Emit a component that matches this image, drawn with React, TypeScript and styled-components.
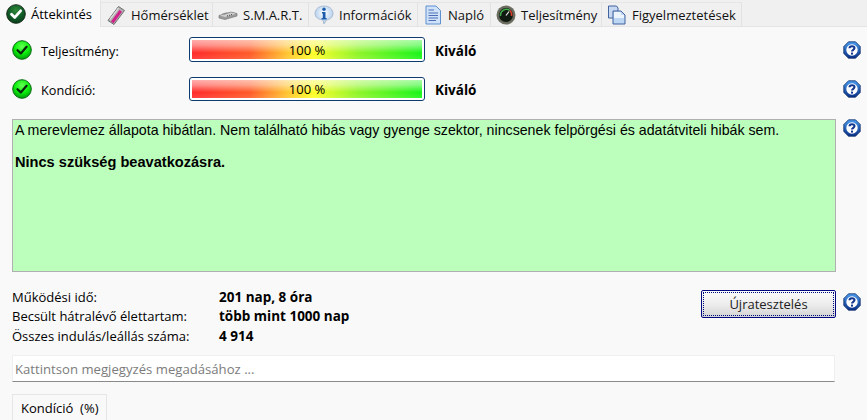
import React from "react";
import styled, { createGlobalStyle } from "styled-components";

const Global = createGlobalStyle`
  html, body { margin: 0; padding: 0; background: #f9f9f9; }
  body { font-family: "Open Sans", "Noto Sans", sans-serif; font-size: 13px; color: #000; }
  #root { width: 867px; height: 420px; overflow: hidden; }
`;

const Page = styled.div`
  width: 867px; height: 420px; display: flex; flex-direction: column; overflow: hidden;
`;
const TabBar = styled.div`
  display: flex; height: 27px; background: #f0f0f0; align-items: flex-start; box-sizing: border-box;
  border-bottom: 1px solid #e4e4e4; flex: none;
`;
const Tab = styled.div<{ $active?: boolean; $w: number }>`
  width: ${p => p.$w}px; height: ${p => (p.$active ? 27 : 24)}px; margin-top: ${p => (p.$active ? 0 : 2)}px;
  background: ${p => (p.$active ? "#f9f9f9" : "#f0f0f0")};
  border-right: 1px solid #e2e2e2; border-top: 1px solid ${p => (p.$active ? "#f9f9f9" : "#e6e6e6")};
  box-sizing: border-box; flex: none;
  display: flex; align-items: center; gap: 5px; padding-left: ${p => (p.$active ? 6 : 5)}px;
  white-space: nowrap; color: ${p => (p.$active ? "#000" : "#111")};
  position: relative; z-index: ${p => (p.$active ? 1 : 0)};
`;
const Content = styled.div`
  padding: 10px 0 0 12px; display: flex; flex-direction: column; flex: 1;
`;
const StatusRow = styled.div`
  display: flex; align-items: center; height: 28px; margin-bottom: 11px;
`;
const IconSlot = styled.div`width: 29px; flex: none; display: flex; margin-top: -3px;`;
const RowLabel = styled.div`width: 148px; flex: none; font-size: 12.7px;`;
const Bar = styled.div<{ $top: number; $h: number }>`
  width: 236px; height: ${p => p.$h}px; box-sizing: border-box; border: 1px solid #0d3b6e; border-radius: 3px;
  padding: 2px; background: #fff; flex: none; align-self: flex-start; margin-top: ${p => p.$top}px;
`;
const BarFill = styled.div`
  height: 100%; display: flex; align-items: center; justify-content: center; position: relative; font-size: 13px;
  background: linear-gradient(90deg, #ff2a2a 0%, #ff5a28 25%, #ffc830 42%, #ffff28 53%, #90f528 72%, #18f518 100%);
  &::before {
    content: ""; position: absolute; inset: 0;
    background: linear-gradient(180deg, rgba(255,255,255,.62) 0%, rgba(255,255,255,.45) 28%, rgba(255,255,255,0) 68%, rgba(255,255,255,.1) 100%);
  }
  span { position: relative; }
`;
const Grade = styled.div`font-weight: 700; font-size: 13.5px; margin-left: 10px; flex: 1;`;
const HelpSlot = styled.div`width: 32px; flex: none; display: flex; padding-left: 8px; box-sizing: border-box; margin-top: -2px;`;
const MessageRow = styled.div`display: flex; align-items: flex-start; margin-top: 4px;`;
const Message = styled.div`
  width: 824px; height: 153px; box-sizing: border-box; flex: none; background: #bcffbc; border: 1px solid #b0b0b0;
  padding: 2px 2px; font-family: "Liberation Sans", Arial, sans-serif; font-size: 14.19px; line-height: 16px; color: #000;
  p { margin: 0 0 16px; }
  strong { font-weight: 700; font-size: 14.6px; }
`;
const HelpTop = styled.div`width: 31px; padding-left: 7px; box-sizing: border-box; display: flex; margin-top: 0;`;
const InfoRow = styled.div`display: flex; margin-top: 15px; height: 58px; align-items: flex-start;`;
const InfoGrid = styled.div`
  display: grid; grid-template-columns: 207px 1fr; grid-auto-rows: 19.5px; width: 689px; flex: none; align-items: center;
  b { font-weight: 700; font-size: 13.5px; }
`;
const Retest = styled.div`
  width: 135px; height: 28px; margin-top: 3px; box-sizing: border-box; flex: none; border: 1px solid #000a80; border-radius: 2px;
  background: linear-gradient(180deg, #fcfcfc 0%, #ededed 50%, #d4d4d4 100%); padding: 1px; display: flex;
  div { flex: 1; border: 1px dotted #000a80; display: flex; align-items: center; justify-content: center; color: #222; }
`;
const HelpBtn = styled.div`padding-left: 7px; display: flex; margin-top: 6px;`;
const Note = styled.div`
  width: 823px; height: 27px; box-sizing: border-box; background: #fff; border: 1px solid #efefef; border-bottom: 1px solid #8a8a8a;
  display: flex; align-items: center; padding-left: 2px; color: #7c7c7c; margin-top: 10px; flex: none; font-size: 13.15px;
`;
const ChartTab = styled.div`
  width: 95px; height: 26px; box-sizing: border-box; border: 1px solid #e6e6e6; border-bottom: none; margin-top: 12px;
  display: flex; align-items: center; padding-left: 8px; white-space: pre; flex: none;
`;

const Check = ({ size = 20, dark = false }: { size?: number; dark?: boolean }) => (
  <svg width={size} height={size} viewBox="0 0 20 20">
    <defs>
      <radialGradient id={dark ? "cd" : "cg"} cx="50%" cy="32%" r="68%">
        <stop offset="0" stopColor={dark ? "#2f8a38" : "#66ff55"} />
        <stop offset=".55" stopColor={dark ? "#12602a" : "#0cf00c"} />
        <stop offset="1" stopColor={dark ? "#0a3c18" : "#009a0a"} />
      </radialGradient>
    </defs>
    <circle cx="10" cy="10" r="9.3" fill={`url(#${dark ? "cd" : "cg"})`} stroke={dark ? "#1a2e1c" : "#0a6a14"} strokeWidth="1" />
    <path d="M5.5 10.2 L8.8 13.4 L14.6 6.8" fill="none" stroke={dark ? "#fff" : "#08240c"} strokeWidth={dark ? 2.8 : 2.2} strokeLinecap="round" strokeLinejoin="round" />
  </svg>
);

const Help = () => (
  <svg width="18" height="18" viewBox="0 0 18 18">
    <defs>
      <linearGradient id="hg" x1="0" y1="0" x2="0" y2="1">
        <stop offset="0" stopColor="#4a9cf0" />
        <stop offset="1" stopColor="#0a2f86" />
      </linearGradient>
    </defs>
    <path d="M5.5 .8 H12.5 L17.2 5.5 V12.5 L12.5 17.2 H5.5 L.8 12.5 V5.5 Z" fill="url(#hg)" stroke="#0a2a66" strokeWidth=".8" strokeLinejoin="round" />
    <circle cx="9" cy="9" r="5.7" fill="#fff" />
    <path d="M6.5 7.2 C6.6 4.6 11.5 4.6 11.5 7.1 C11.5 8.8 9 8.8 9 10.6" fill="none" stroke="#12358e" strokeWidth="2.1" />
    <rect x="8" y="11.6" width="2" height="2" fill="#12358e" />
  </svg>
);

const ThermoIcon = () => (
  <svg width="20" height="20" viewBox="0 0 20 20">
    <path d="M2 15.5 L12.5 1.5 L18.5 5.5 L8 19.5 Z" fill="#b4b0b0" stroke="#6e6e6e" strokeWidth="1" strokeLinejoin="round" />
    <path d="M5 16.5 L13.5 5 L16 6.8 L7.5 18.3 Z" fill="#d0208a" />
    <path d="M3.8 14.5 L12.5 3" stroke="#e6e6e6" strokeWidth="1.2" />
  </svg>
);
const DriveIcon = () => (
  <svg width="20" height="20" viewBox="0 0 20 20">
    <path d="M1 10.5 L13 7 L19 8.5 L19 11 L7 14.5 L1 13 Z" fill="#9c9c9c" stroke="#6c6c6c" strokeWidth=".6" />
    <path d="M2 10.5 L13 7.5 L18 8.7 L7 12 Z" fill="#d0d0d0" />
    <path d="M3.5 9 L8 7.5 L11 8 L6 9.8 Z" fill="#8a8a8a" />
    <path d="M9 11 L10 10.7 M11 10.4 L12 10.1 M13 9.8 L14 9.5" stroke="#444" strokeWidth="1" />
  </svg>
);
const InfoIcon = () => (
  <svg width="20" height="20" viewBox="0 0 20 20">
    <defs>
      <radialGradient id="ig" cx="50%" cy="40%" r="60%">
        <stop offset="0" stopColor="#ffffff" />
        <stop offset="1" stopColor="#a9c8ea" />
      </radialGradient>
    </defs>
    <path d="M10 1 C15 1 19 4 19 8.5 C19 12.5 15.5 14.5 12.5 15 L10 19 L9 15 C4.5 14.5 1 12.5 1 8.5 C1 4 5 1 10 1 Z" fill="url(#ig)" stroke="#9fb4cc" strokeWidth=".8" />
    <circle cx="10" cy="4.2" r="1.7" fill="#1c5cab" />
    <path d="M8 7 H11.5 V13 H12.6 V14.4 H7.6 V13 H8.8 V8.4 H8 Z" fill="#1c5cab" />
  </svg>
);
const DocIcon = ({ copy = false }: { copy?: boolean }) => (
  <svg width="20" height="20" viewBox="0 0 20 20">
    {copy && <path d="M1.5 1 H9.5 L11 3 V13 H1.5 Z" fill="#c6d8f2" stroke="#40629e" strokeWidth="1" />}
    <path d={copy ? "M6 6 H14 L18 10 V19 H6 Z" : "M3 1 H13 L17.5 5.5 V19 H3 Z"} fill={copy ? "#bcd6f4" : "#cfe2fa"} stroke={copy ? "#40629e" : "#5f90cf"} strokeWidth="1" />
    {copy && <path d="M7 7 H13.5 L14 10 H17 V13 H7 Z" fill="#eef4fc" />}
    {!copy && <path d="M5.5 5 H11 M5.5 8 H15 M5.5 10.5 H15 M5.5 13 H15 M5.5 15.5 H13" stroke="#4f6fb4" strokeWidth="1.2" />}
  </svg>
);
const GaugeIcon = () => (
  <svg width="20" height="20" viewBox="0 0 20 20">
    <circle cx="10" cy="10" r="9.5" fill="#6b6b60" />
    <circle cx="10" cy="10" r="7" fill="#101a10" />
    <path d="M4.5 11 A6 6 0 0 1 14 5.5" fill="none" stroke="#3fa84a" strokeWidth="1.6" />
    <path d="M14 5.5 A6 6 0 0 1 15.5 11" fill="none" stroke="#d63a2a" strokeWidth="1.6" />
    <path d="M10 10.5 L13 6.5" stroke="#e8e8e8" strokeWidth="1.2" />
  </svg>
);

const tabs = [
  { w: 101, label: "Áttekintés", icon: <Check dark size={20} />, active: true },
  { w: 112, label: "Hőmérséklet", icon: <ThermoIcon /> },
  { w: 96, label: "S.M.A.R.T.", icon: <DriveIcon /> },
  { w: 109, label: "Információk", icon: <InfoIcon /> },
  { w: 73, label: "Napló", icon: <DocIcon /> },
  { w: 111, label: "Teljesítmény", icon: <GaugeIcon /> },
  { w: 140, label: "Figyelmeztetések", icon: <DocIcon copy /> },
];

const rows = [
  { label: "Teljesítmény:", top: 0, h: 25 },
  { label: "Kondíció:", top: 1, h: 24 },
];

export default function App() {
  return (
    <Page>
      <Global />
      <TabBar>
        {tabs.map(t => (
          <Tab key={t.label} $w={t.w} $active={t.active}>
            {t.icon}
            <span>{t.label}</span>
          </Tab>
        ))}
      </TabBar>
      <Content>
        {rows.map(r => (
          <StatusRow key={r.label}>
            <IconSlot><Check size={20} /></IconSlot>
            <RowLabel>{r.label}</RowLabel>
            <Bar $top={r.top} $h={r.h}><BarFill><span>100 %</span></BarFill></Bar>
            <Grade>Kiváló</Grade>
            <HelpSlot><Help /></HelpSlot>
          </StatusRow>
        ))}
        <MessageRow>
          <Message>
            <p>A merevlemez állapota hibátlan. Nem található hibás vagy gyenge szektor, nincsenek felpörgési és adatátviteli hibák sem.</p>
            <strong>Nincs szükség beavatkozásra.</strong>
          </Message>
          <HelpTop><Help /></HelpTop>
        </MessageRow>
        <InfoRow>
          <InfoGrid>
            <span>Működési idő:</span><b>201 nap, 8 óra</b>
            <span>Becsült hátralévő élettartam:</span><b>több mint 1000 nap</b>
            <span>Összes indulás/leállás száma:</span><b>4 914</b>
          </InfoGrid>
          <Retest><div>Újratesztelés</div></Retest>
          <HelpBtn><Help /></HelpBtn>
        </InfoRow>
        <Note>Kattintson megjegyzés megadásához ...</Note>
        <ChartTab>Kondíció  (%)</ChartTab>
      </Content>
    </Page>
  );
}
